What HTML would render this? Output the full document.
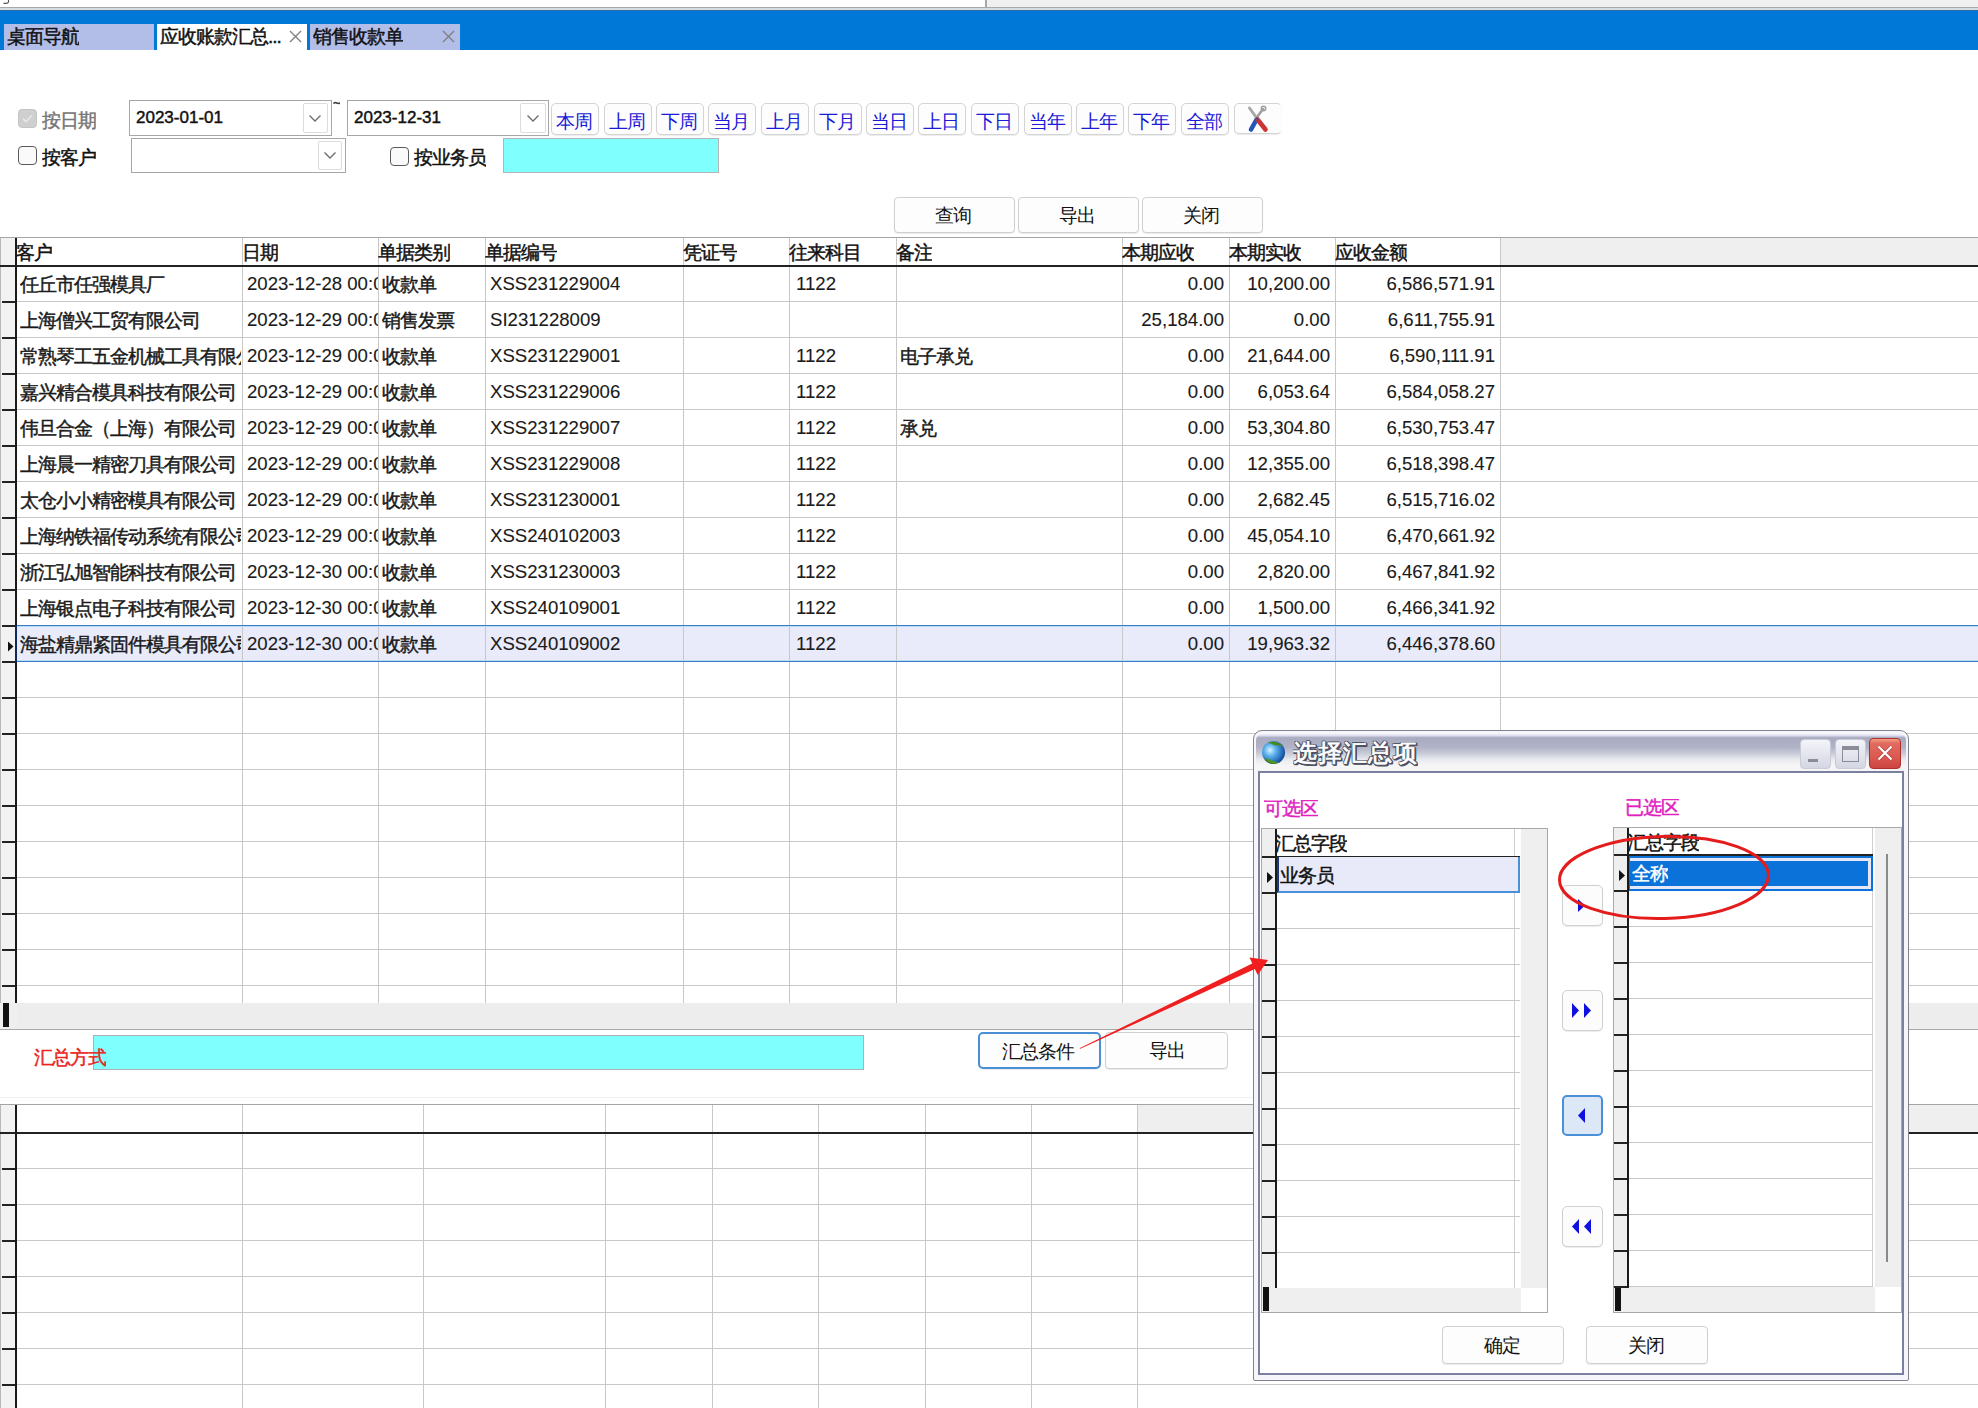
<!DOCTYPE html><html><head><meta charset='utf-8'><style>
*{margin:0;padding:0;box-sizing:border-box}
html,body{width:1978px;height:1408px;overflow:hidden;background:#fff}
body{position:relative;font-family:"Liberation Sans",sans-serif;font-size:19px;letter-spacing:-1px;color:#000}
.t{-webkit-text-stroke:0.45px currentColor}
.n{font-size:18.6px!important;letter-spacing:0!important;-webkit-text-stroke:0.1px currentColor}
div{position:absolute}
.t{white-space:nowrap;overflow:hidden}
.btn{border:1px solid #d0d0d0;border-radius:4px;background:#fdfdfd;text-align:center;box-shadow:0 1px 1px rgba(0,0,0,0.08)}
</style></head><body><div style="left:0px;top:0px;width:986px;height:7px;background:#fff"></div>
<div style="left:987px;top:0px;width:991px;height:7px;background:#f0f0f0"></div>
<div style="left:985px;top:0px;width:2px;height:8px;background:#a8a8a8"></div>
<div style="left:0px;top:7px;width:1978px;height:1px;background:#a8a8a8"></div>
<div style="left:0px;top:8px;width:1978px;height:2px;background:#d6dde2"></div>
<div style="left:0px;top:10px;width:1978px;height:1px;background:#2c6aa8"></div>
<div style="left:0px;top:11px;width:1978px;height:39px;background:#0078d7"></div>
<div style="left:4px;top:24px;width:150px;height:26px;background:#b2bde8"></div>
<div style="left:157px;top:24px;width:150px;height:26px;background:#fff"></div>
<div style="left:310px;top:24px;width:150px;height:26px;background:#b2bde8"></div>
<div class="t" style="left:7px;top:24px;line-height:26px;color:#111">桌面导航</div>
<div class="t" style="left:160px;top:24px;line-height:26px;color:#111">应收账款汇总...</div>
<div class="t" style="left:313px;top:24px;line-height:26px;color:#111">销售收款单</div>
<svg style="position:absolute;left:289px;top:30px" width="13" height="13"><path d="M1 1L12 12M12 1L1 12" stroke="#808080" stroke-width="1.4"/></svg>
<svg style="position:absolute;left:442px;top:30px" width="13" height="13"><path d="M1 1L12 12M12 1L1 12" stroke="#808080" stroke-width="1.4"/></svg>
<div style="left:18px;top:109px;width:19px;height:19px;border-radius:4px;background:#cfcfcf;border:1px solid #c4c4c4"></div>
<svg style="position:absolute;left:18px;top:109px" width="19" height="19"><path d="M5 9.5L8 12.5L14 6.5" stroke="#e8e8e8" stroke-width="1.6" fill="none"/></svg>
<div class="t" style="left:42px;top:106px;line-height:30px;color:#767676">按日期</div>
<div style="left:18px;top:146px;width:19px;height:19px;border-radius:4px;background:#fafafa;border:1.5px solid #5a5a5a"></div>
<div class="t" style="left:42px;top:143px;line-height:30px;color:#111">按客户</div>
<div style="left:129px;top:100px;width:203px;height:36px;border:1px solid #a6a6a6;background:#fff"></div>
<div style="left:303px;top:103px;width:25px;height:30px;border:1px solid #dcdcdc;border-radius:2px;background:#fff"></div>
<svg style="position:absolute;left:308px;top:114px" width="14" height="9"><path d="M1.5 1.5L7 7L12.5 1.5" stroke="#6a6a6a" stroke-width="1.3" fill="none"/></svg>
<div class="t" style="left:136px;top:100px;line-height:36px;font-size:17px;letter-spacing:0;color:#111">2023-01-01</div>
<div class="t" style="left:333px;top:93px;line-height:20px;font-size:14px;color:#333">~</div>
<div style="left:347px;top:100px;width:202px;height:36px;border:1px solid #a6a6a6;background:#fff"></div>
<div style="left:520px;top:103px;width:26px;height:30px;border:1px solid #dcdcdc;border-radius:2px;background:#fff"></div>
<svg style="position:absolute;left:526px;top:114px" width="14" height="9"><path d="M1.5 1.5L7 7L12.5 1.5" stroke="#6a6a6a" stroke-width="1.3" fill="none"/></svg>
<div class="t" style="left:354px;top:100px;line-height:36px;font-size:17px;letter-spacing:0;color:#111">2023-12-31</div>
<div style="left:131px;top:138px;width:215px;height:35px;border:1px solid #a6a6a6;background:#fff"></div>
<div style="left:318px;top:141px;width:24px;height:29px;border:1px solid #dcdcdc;border-radius:2px;background:#fff"></div>
<svg style="position:absolute;left:323px;top:151px" width="14" height="9"><path d="M1.5 1.5L7 7L12.5 1.5" stroke="#6a6a6a" stroke-width="1.3" fill="none"/></svg>
<div style="left:390px;top:147px;width:19px;height:19px;border-radius:4px;background:#fafafa;border:1.5px solid #5a5a5a"></div>
<div class="t" style="left:414px;top:143px;line-height:30px;color:#111">按业务员</div>
<div style="left:503px;top:138px;width:216px;height:35px;border:1px solid #b4b4b4;background:#80ffff"></div>
<div class="btn" style="left:551px;top:103px;width:48px;height:32px;border-color:#d4d4d4;border-radius:5px;line-height:36px;padding-right:3px;color:#1a1ad8">本周</div>
<div class="btn" style="left:604px;top:103px;width:48px;height:32px;border-color:#d4d4d4;border-radius:5px;line-height:36px;padding-right:3px;color:#1a1ad8">上周</div>
<div class="btn" style="left:656px;top:103px;width:48px;height:32px;border-color:#d4d4d4;border-radius:5px;line-height:36px;padding-right:3px;color:#1a1ad8">下周</div>
<div class="btn" style="left:708px;top:103px;width:48px;height:32px;border-color:#d4d4d4;border-radius:5px;line-height:36px;padding-right:3px;color:#1a1ad8">当月</div>
<div class="btn" style="left:761px;top:103px;width:48px;height:32px;border-color:#d4d4d4;border-radius:5px;line-height:36px;padding-right:3px;color:#1a1ad8">上月</div>
<div class="btn" style="left:814px;top:103px;width:48px;height:32px;border-color:#d4d4d4;border-radius:5px;line-height:36px;padding-right:3px;color:#1a1ad8">下月</div>
<div class="btn" style="left:866px;top:103px;width:48px;height:32px;border-color:#d4d4d4;border-radius:5px;line-height:36px;padding-right:3px;color:#1a1ad8">当日</div>
<div class="btn" style="left:918px;top:103px;width:48px;height:32px;border-color:#d4d4d4;border-radius:5px;line-height:36px;padding-right:3px;color:#1a1ad8">上日</div>
<div class="btn" style="left:971px;top:103px;width:48px;height:32px;border-color:#d4d4d4;border-radius:5px;line-height:36px;padding-right:3px;color:#1a1ad8">下日</div>
<div class="btn" style="left:1024px;top:103px;width:48px;height:32px;border-color:#d4d4d4;border-radius:5px;line-height:36px;padding-right:3px;color:#1a1ad8">当年</div>
<div class="btn" style="left:1076px;top:103px;width:48px;height:32px;border-color:#d4d4d4;border-radius:5px;line-height:36px;padding-right:3px;color:#1a1ad8">上年</div>
<div class="btn" style="left:1128px;top:103px;width:48px;height:32px;border-color:#d4d4d4;border-radius:5px;line-height:36px;padding-right:3px;color:#1a1ad8">下年</div>
<div class="btn" style="left:1181px;top:103px;width:48px;height:32px;border-color:#d4d4d4;border-radius:5px;line-height:36px;padding-right:3px;color:#1a1ad8">全部</div>
<div class="btn" style="left:1234px;top:103px;width:48px;height:31px;border-color:#d4d4d4;border-radius:5px;border-right-color:transparent"></div>
<svg style="position:absolute;left:1240px;top:100px" width="34" height="34" viewBox="0 0 34 34">
<path d="M9.5 8 L17 18.5" stroke="#a8a8a8" stroke-width="3" stroke-linecap="round"/>
<path d="M23 9 L16 18.5" stroke="#a0a0a0" stroke-width="2.6" stroke-linecap="round"/>
<circle cx="23.5" cy="8.5" r="2.2" fill="none" stroke="#a0a0a0" stroke-width="1.6"/>
<path d="M16 20.5 L11 29.5" stroke="#2456b8" stroke-width="4.6" stroke-linecap="round"/>
<path d="M17.5 19.5 L25.5 29.5" stroke="#cc3434" stroke-width="4.6" stroke-linecap="round"/>
<path d="M16.5 17.5 L18 20.5" stroke="#704070" stroke-width="2.4"/>
</svg>
<div class="btn" style="left:894px;top:197px;width:121px;height:36px;line-height:36px;padding-right:4px;color:#111">查询</div>
<div class="btn" style="left:1018px;top:197px;width:121px;height:36px;line-height:36px;padding-right:4px;color:#111">导出</div>
<div class="btn" style="left:1142px;top:197px;width:121px;height:36px;line-height:36px;padding-right:4px;color:#111">关闭</div>
<div style="left:0px;top:237px;width:1978px;height:1px;background:#a4a4a4"></div>
<div style="left:0px;top:238px;width:15px;height:765px;background:#f2f2f2"></div>
<div style="left:0px;top:238px;width:1px;height:765px;background:#b8b8b8"></div>
<div style="left:1501px;top:238px;width:477px;height:27px;background:#efefef"></div>
<div style="left:242px;top:238px;width:1px;height:765px;background:#c8c8c8"></div>
<div style="left:378px;top:238px;width:1px;height:765px;background:#c8c8c8"></div>
<div style="left:485px;top:238px;width:1px;height:765px;background:#c8c8c8"></div>
<div style="left:683px;top:238px;width:1px;height:765px;background:#c8c8c8"></div>
<div style="left:789px;top:238px;width:1px;height:765px;background:#c8c8c8"></div>
<div style="left:896px;top:238px;width:1px;height:765px;background:#c8c8c8"></div>
<div style="left:1122px;top:238px;width:1px;height:765px;background:#c8c8c8"></div>
<div style="left:1229px;top:238px;width:1px;height:765px;background:#c8c8c8"></div>
<div style="left:1335px;top:238px;width:1px;height:765px;background:#c8c8c8"></div>
<div style="left:1500px;top:238px;width:1px;height:765px;background:#c8c8c8"></div>
<div style="left:17px;top:301px;width:1961px;height:1px;background:#c8c8c8"></div>
<div style="left:2px;top:301px;width:14px;height:2px;background:#222"></div>
<div style="left:17px;top:337px;width:1961px;height:1px;background:#c8c8c8"></div>
<div style="left:2px;top:337px;width:14px;height:2px;background:#222"></div>
<div style="left:17px;top:373px;width:1961px;height:1px;background:#c8c8c8"></div>
<div style="left:2px;top:373px;width:14px;height:2px;background:#222"></div>
<div style="left:17px;top:409px;width:1961px;height:1px;background:#c8c8c8"></div>
<div style="left:2px;top:409px;width:14px;height:2px;background:#222"></div>
<div style="left:17px;top:445px;width:1961px;height:1px;background:#c8c8c8"></div>
<div style="left:2px;top:445px;width:14px;height:2px;background:#222"></div>
<div style="left:17px;top:481px;width:1961px;height:1px;background:#c8c8c8"></div>
<div style="left:2px;top:481px;width:14px;height:2px;background:#222"></div>
<div style="left:17px;top:517px;width:1961px;height:1px;background:#c8c8c8"></div>
<div style="left:2px;top:517px;width:14px;height:2px;background:#222"></div>
<div style="left:17px;top:553px;width:1961px;height:1px;background:#c8c8c8"></div>
<div style="left:2px;top:553px;width:14px;height:2px;background:#222"></div>
<div style="left:17px;top:589px;width:1961px;height:1px;background:#c8c8c8"></div>
<div style="left:2px;top:589px;width:14px;height:2px;background:#222"></div>
<div style="left:17px;top:625px;width:1961px;height:1px;background:#c8c8c8"></div>
<div style="left:2px;top:625px;width:14px;height:2px;background:#222"></div>
<div style="left:17px;top:661px;width:1961px;height:1px;background:#c8c8c8"></div>
<div style="left:2px;top:661px;width:14px;height:2px;background:#222"></div>
<div style="left:17px;top:697px;width:1961px;height:1px;background:#c8c8c8"></div>
<div style="left:2px;top:697px;width:14px;height:2px;background:#222"></div>
<div style="left:17px;top:733px;width:1961px;height:1px;background:#c8c8c8"></div>
<div style="left:2px;top:733px;width:14px;height:2px;background:#222"></div>
<div style="left:17px;top:769px;width:1961px;height:1px;background:#c8c8c8"></div>
<div style="left:2px;top:769px;width:14px;height:2px;background:#222"></div>
<div style="left:17px;top:805px;width:1961px;height:1px;background:#c8c8c8"></div>
<div style="left:2px;top:805px;width:14px;height:2px;background:#222"></div>
<div style="left:17px;top:841px;width:1961px;height:1px;background:#c8c8c8"></div>
<div style="left:2px;top:841px;width:14px;height:2px;background:#222"></div>
<div style="left:17px;top:877px;width:1961px;height:1px;background:#c8c8c8"></div>
<div style="left:2px;top:877px;width:14px;height:2px;background:#222"></div>
<div style="left:17px;top:913px;width:1961px;height:1px;background:#c8c8c8"></div>
<div style="left:2px;top:913px;width:14px;height:2px;background:#222"></div>
<div style="left:17px;top:949px;width:1961px;height:1px;background:#c8c8c8"></div>
<div style="left:2px;top:949px;width:14px;height:2px;background:#222"></div>
<div style="left:17px;top:985px;width:1961px;height:1px;background:#c8c8c8"></div>
<div style="left:2px;top:985px;width:14px;height:2px;background:#222"></div>
<div style="left:0px;top:265px;width:1978px;height:2px;background:#222"></div>
<div style="left:15px;top:238px;width:2px;height:765px;background:#1a1a1a"></div>
<div class="t" style="left:16px;top:239px;line-height:27px;color:#111">客户</div>
<div class="t" style="left:242px;top:239px;line-height:27px;color:#111">日期</div>
<div class="t" style="left:378px;top:239px;line-height:27px;color:#111">单据类别</div>
<div class="t" style="left:485px;top:239px;line-height:27px;color:#111">单据编号</div>
<div class="t" style="left:683px;top:239px;line-height:27px;color:#111">凭证号</div>
<div class="t" style="left:789px;top:239px;line-height:27px;color:#111">往来科目</div>
<div class="t" style="left:896px;top:239px;line-height:27px;color:#111">备注</div>
<div class="t" style="left:1122px;top:239px;line-height:27px;color:#111">本期应收</div>
<div class="t" style="left:1229px;top:239px;line-height:27px;color:#111">本期实收</div>
<div class="t" style="left:1335px;top:239px;line-height:27px;color:#111">应收金额</div>
<div style="left:17px;top:626px;width:1961px;height:36px;background:#e9ebfa"></div>
<div style="left:242px;top:626px;width:1px;height:36px;background:#c8c8c8"></div>
<div style="left:378px;top:626px;width:1px;height:36px;background:#c8c8c8"></div>
<div style="left:485px;top:626px;width:1px;height:36px;background:#c8c8c8"></div>
<div style="left:683px;top:626px;width:1px;height:36px;background:#c8c8c8"></div>
<div style="left:789px;top:626px;width:1px;height:36px;background:#c8c8c8"></div>
<div style="left:896px;top:626px;width:1px;height:36px;background:#c8c8c8"></div>
<div style="left:1122px;top:626px;width:1px;height:36px;background:#c8c8c8"></div>
<div style="left:1229px;top:626px;width:1px;height:36px;background:#c8c8c8"></div>
<div style="left:1335px;top:626px;width:1px;height:36px;background:#c8c8c8"></div>
<div style="left:1500px;top:626px;width:1px;height:36px;background:#c8c8c8"></div>
<div style="left:17px;top:625px;width:1961px;height:1px;background:#3a7cc4"></div>
<div style="left:17px;top:626px;width:1961px;height:1px;background:#b8dcf4"></div>
<div style="left:17px;top:660px;width:1961px;height:1px;background:#b8dcf4"></div>
<div style="left:17px;top:661px;width:1961px;height:1px;background:#3a7cc4"></div>
<div style="left:15px;top:625px;width:2px;height:37px;background:#0a2a60"></div>
<svg style="position:absolute;left:7px;top:641px" width="8" height="12"><path d="M1 0.5L6.5 5.5L1 10.5Z" fill="#111"/></svg>
<div class="t" style="left:20px;top:268px;line-height:34px;width:221px;color:#1a1a1a">任丘市任强模具厂</div>
<div class="t n" style="left:247px;top:267px;line-height:34px;width:131px;color:#1a1a1a">2023-12-28 00:00:00</div>
<div class="t" style="left:382px;top:268px;line-height:34px;width:103px;color:#1a1a1a">收款单</div>
<div class="t n" style="left:490px;top:267px;line-height:34px;width:193px;color:#1a1a1a">XSS231229004</div>
<div class="t n" style="left:796px;top:267px;line-height:34px;width:100px;color:#1a1a1a">1122</div>
<div class="t n" style="left:1123px;top:267px;line-height:34px;width:101px;text-align:right;color:#1a1a1a">0.00</div>
<div class="t n" style="left:1230px;top:267px;line-height:34px;width:100px;text-align:right;color:#1a1a1a">10,200.00</div>
<div class="t n" style="left:1336px;top:267px;line-height:34px;width:159px;text-align:right;color:#1a1a1a">6,586,571.91</div>
<div class="t" style="left:20px;top:304px;line-height:34px;width:221px;color:#1a1a1a">上海僧兴工贸有限公司</div>
<div class="t n" style="left:247px;top:303px;line-height:34px;width:131px;color:#1a1a1a">2023-12-29 00:00:00</div>
<div class="t" style="left:382px;top:304px;line-height:34px;width:103px;color:#1a1a1a">销售发票</div>
<div class="t n" style="left:490px;top:303px;line-height:34px;width:193px;color:#1a1a1a">SI231228009</div>
<div class="t n" style="left:1123px;top:303px;line-height:34px;width:101px;text-align:right;color:#1a1a1a">25,184.00</div>
<div class="t n" style="left:1230px;top:303px;line-height:34px;width:100px;text-align:right;color:#1a1a1a">0.00</div>
<div class="t n" style="left:1336px;top:303px;line-height:34px;width:159px;text-align:right;color:#1a1a1a">6,611,755.91</div>
<div class="t" style="left:20px;top:340px;line-height:34px;width:221px;color:#1a1a1a">常熟琴工五金机械工具有限公司</div>
<div class="t n" style="left:247px;top:339px;line-height:34px;width:131px;color:#1a1a1a">2023-12-29 00:00:00</div>
<div class="t" style="left:382px;top:340px;line-height:34px;width:103px;color:#1a1a1a">收款单</div>
<div class="t n" style="left:490px;top:339px;line-height:34px;width:193px;color:#1a1a1a">XSS231229001</div>
<div class="t n" style="left:796px;top:339px;line-height:34px;width:100px;color:#1a1a1a">1122</div>
<div class="t" style="left:900px;top:340px;line-height:34px;width:222px;color:#1a1a1a">电子承兑</div>
<div class="t n" style="left:1123px;top:339px;line-height:34px;width:101px;text-align:right;color:#1a1a1a">0.00</div>
<div class="t n" style="left:1230px;top:339px;line-height:34px;width:100px;text-align:right;color:#1a1a1a">21,644.00</div>
<div class="t n" style="left:1336px;top:339px;line-height:34px;width:159px;text-align:right;color:#1a1a1a">6,590,111.91</div>
<div class="t" style="left:20px;top:376px;line-height:34px;width:221px;color:#1a1a1a">嘉兴精合模具科技有限公司</div>
<div class="t n" style="left:247px;top:375px;line-height:34px;width:131px;color:#1a1a1a">2023-12-29 00:00:00</div>
<div class="t" style="left:382px;top:376px;line-height:34px;width:103px;color:#1a1a1a">收款单</div>
<div class="t n" style="left:490px;top:375px;line-height:34px;width:193px;color:#1a1a1a">XSS231229006</div>
<div class="t n" style="left:796px;top:375px;line-height:34px;width:100px;color:#1a1a1a">1122</div>
<div class="t n" style="left:1123px;top:375px;line-height:34px;width:101px;text-align:right;color:#1a1a1a">0.00</div>
<div class="t n" style="left:1230px;top:375px;line-height:34px;width:100px;text-align:right;color:#1a1a1a">6,053.64</div>
<div class="t n" style="left:1336px;top:375px;line-height:34px;width:159px;text-align:right;color:#1a1a1a">6,584,058.27</div>
<div class="t" style="left:20px;top:412px;line-height:34px;width:221px;color:#1a1a1a">伟旦合金（上海）有限公司</div>
<div class="t n" style="left:247px;top:411px;line-height:34px;width:131px;color:#1a1a1a">2023-12-29 00:00:00</div>
<div class="t" style="left:382px;top:412px;line-height:34px;width:103px;color:#1a1a1a">收款单</div>
<div class="t n" style="left:490px;top:411px;line-height:34px;width:193px;color:#1a1a1a">XSS231229007</div>
<div class="t n" style="left:796px;top:411px;line-height:34px;width:100px;color:#1a1a1a">1122</div>
<div class="t" style="left:900px;top:412px;line-height:34px;width:222px;color:#1a1a1a">承兑</div>
<div class="t n" style="left:1123px;top:411px;line-height:34px;width:101px;text-align:right;color:#1a1a1a">0.00</div>
<div class="t n" style="left:1230px;top:411px;line-height:34px;width:100px;text-align:right;color:#1a1a1a">53,304.80</div>
<div class="t n" style="left:1336px;top:411px;line-height:34px;width:159px;text-align:right;color:#1a1a1a">6,530,753.47</div>
<div class="t" style="left:20px;top:448px;line-height:34px;width:221px;color:#1a1a1a">上海晨一精密刀具有限公司</div>
<div class="t n" style="left:247px;top:447px;line-height:34px;width:131px;color:#1a1a1a">2023-12-29 00:00:00</div>
<div class="t" style="left:382px;top:448px;line-height:34px;width:103px;color:#1a1a1a">收款单</div>
<div class="t n" style="left:490px;top:447px;line-height:34px;width:193px;color:#1a1a1a">XSS231229008</div>
<div class="t n" style="left:796px;top:447px;line-height:34px;width:100px;color:#1a1a1a">1122</div>
<div class="t n" style="left:1123px;top:447px;line-height:34px;width:101px;text-align:right;color:#1a1a1a">0.00</div>
<div class="t n" style="left:1230px;top:447px;line-height:34px;width:100px;text-align:right;color:#1a1a1a">12,355.00</div>
<div class="t n" style="left:1336px;top:447px;line-height:34px;width:159px;text-align:right;color:#1a1a1a">6,518,398.47</div>
<div class="t" style="left:20px;top:484px;line-height:34px;width:221px;color:#1a1a1a">太仓小小精密模具有限公司</div>
<div class="t n" style="left:247px;top:483px;line-height:34px;width:131px;color:#1a1a1a">2023-12-29 00:00:00</div>
<div class="t" style="left:382px;top:484px;line-height:34px;width:103px;color:#1a1a1a">收款单</div>
<div class="t n" style="left:490px;top:483px;line-height:34px;width:193px;color:#1a1a1a">XSS231230001</div>
<div class="t n" style="left:796px;top:483px;line-height:34px;width:100px;color:#1a1a1a">1122</div>
<div class="t n" style="left:1123px;top:483px;line-height:34px;width:101px;text-align:right;color:#1a1a1a">0.00</div>
<div class="t n" style="left:1230px;top:483px;line-height:34px;width:100px;text-align:right;color:#1a1a1a">2,682.45</div>
<div class="t n" style="left:1336px;top:483px;line-height:34px;width:159px;text-align:right;color:#1a1a1a">6,515,716.02</div>
<div class="t" style="left:20px;top:520px;line-height:34px;width:221px;color:#1a1a1a">上海纳铁福传动系统有限公司</div>
<div class="t n" style="left:247px;top:519px;line-height:34px;width:131px;color:#1a1a1a">2023-12-29 00:00:00</div>
<div class="t" style="left:382px;top:520px;line-height:34px;width:103px;color:#1a1a1a">收款单</div>
<div class="t n" style="left:490px;top:519px;line-height:34px;width:193px;color:#1a1a1a">XSS240102003</div>
<div class="t n" style="left:796px;top:519px;line-height:34px;width:100px;color:#1a1a1a">1122</div>
<div class="t n" style="left:1123px;top:519px;line-height:34px;width:101px;text-align:right;color:#1a1a1a">0.00</div>
<div class="t n" style="left:1230px;top:519px;line-height:34px;width:100px;text-align:right;color:#1a1a1a">45,054.10</div>
<div class="t n" style="left:1336px;top:519px;line-height:34px;width:159px;text-align:right;color:#1a1a1a">6,470,661.92</div>
<div class="t" style="left:20px;top:556px;line-height:34px;width:221px;color:#1a1a1a">浙江弘旭智能科技有限公司</div>
<div class="t n" style="left:247px;top:555px;line-height:34px;width:131px;color:#1a1a1a">2023-12-30 00:00:00</div>
<div class="t" style="left:382px;top:556px;line-height:34px;width:103px;color:#1a1a1a">收款单</div>
<div class="t n" style="left:490px;top:555px;line-height:34px;width:193px;color:#1a1a1a">XSS231230003</div>
<div class="t n" style="left:796px;top:555px;line-height:34px;width:100px;color:#1a1a1a">1122</div>
<div class="t n" style="left:1123px;top:555px;line-height:34px;width:101px;text-align:right;color:#1a1a1a">0.00</div>
<div class="t n" style="left:1230px;top:555px;line-height:34px;width:100px;text-align:right;color:#1a1a1a">2,820.00</div>
<div class="t n" style="left:1336px;top:555px;line-height:34px;width:159px;text-align:right;color:#1a1a1a">6,467,841.92</div>
<div class="t" style="left:20px;top:592px;line-height:34px;width:221px;color:#1a1a1a">上海银点电子科技有限公司</div>
<div class="t n" style="left:247px;top:591px;line-height:34px;width:131px;color:#1a1a1a">2023-12-30 00:00:00</div>
<div class="t" style="left:382px;top:592px;line-height:34px;width:103px;color:#1a1a1a">收款单</div>
<div class="t n" style="left:490px;top:591px;line-height:34px;width:193px;color:#1a1a1a">XSS240109001</div>
<div class="t n" style="left:796px;top:591px;line-height:34px;width:100px;color:#1a1a1a">1122</div>
<div class="t n" style="left:1123px;top:591px;line-height:34px;width:101px;text-align:right;color:#1a1a1a">0.00</div>
<div class="t n" style="left:1230px;top:591px;line-height:34px;width:100px;text-align:right;color:#1a1a1a">1,500.00</div>
<div class="t n" style="left:1336px;top:591px;line-height:34px;width:159px;text-align:right;color:#1a1a1a">6,466,341.92</div>
<div class="t" style="left:20px;top:628px;line-height:34px;width:221px;color:#1a1a1a">海盐精鼎紧固件模具有限公司</div>
<div class="t n" style="left:247px;top:627px;line-height:34px;width:131px;color:#1a1a1a">2023-12-30 00:00:00</div>
<div class="t" style="left:382px;top:628px;line-height:34px;width:103px;color:#1a1a1a">收款单</div>
<div class="t n" style="left:490px;top:627px;line-height:34px;width:193px;color:#1a1a1a">XSS240109002</div>
<div class="t n" style="left:796px;top:627px;line-height:34px;width:100px;color:#1a1a1a">1122</div>
<div class="t n" style="left:1123px;top:627px;line-height:34px;width:101px;text-align:right;color:#1a1a1a">0.00</div>
<div class="t n" style="left:1230px;top:627px;line-height:34px;width:100px;text-align:right;color:#1a1a1a">19,963.32</div>
<div class="t n" style="left:1336px;top:627px;line-height:34px;width:159px;text-align:right;color:#1a1a1a">6,446,378.60</div>
<div style="left:17px;top:1003px;width:1961px;height:26px;background:#ededed"></div>
<div style="left:0px;top:1003px;width:17px;height:26px;background:#efefef"></div>
<div style="left:3px;top:1003px;width:6px;height:24px;background:#111"></div>
<div style="left:0px;top:1029px;width:1978px;height:1px;background:#a8a8a8"></div>
<div style="left:93px;top:1035px;width:771px;height:35px;border:1px solid #b0b0b0;background:#80ffff"></div>
<div class="t" style="left:34px;top:1041px;line-height:34px;color:#e8241c">汇总方式</div>
<div class="btn" style="left:978px;top:1032px;width:123px;height:37px;line-height:35px;padding-right:4px;border:2px solid #4a8fd6;border-radius:5px;color:#111">汇总条件</div>
<div class="btn" style="left:1105px;top:1032px;width:123px;height:37px;line-height:36px;color:#111">导出</div>
<div style="left:0px;top:1104px;width:1978px;height:1px;background:#a4a4a4"></div>
<div style="left:0px;top:1105px;width:15px;height:303px;background:#f2f2f2"></div>
<div style="left:0px;top:1105px;width:1px;height:303px;background:#b8b8b8"></div>
<div style="left:1138px;top:1105px;width:840px;height:27px;background:#efefef"></div>
<div style="left:242px;top:1105px;width:1px;height:303px;background:#c8c8c8"></div>
<div style="left:423px;top:1105px;width:1px;height:303px;background:#c8c8c8"></div>
<div style="left:605px;top:1105px;width:1px;height:303px;background:#c8c8c8"></div>
<div style="left:712px;top:1105px;width:1px;height:303px;background:#c8c8c8"></div>
<div style="left:818px;top:1105px;width:1px;height:303px;background:#c8c8c8"></div>
<div style="left:925px;top:1105px;width:1px;height:303px;background:#c8c8c8"></div>
<div style="left:1031px;top:1105px;width:1px;height:303px;background:#c8c8c8"></div>
<div style="left:1137px;top:1105px;width:1px;height:303px;background:#c8c8c8"></div>
<div style="left:17px;top:1168px;width:1961px;height:1px;background:#c8c8c8"></div>
<div style="left:2px;top:1168px;width:14px;height:2px;background:#222"></div>
<div style="left:17px;top:1204px;width:1961px;height:1px;background:#c8c8c8"></div>
<div style="left:2px;top:1204px;width:14px;height:2px;background:#222"></div>
<div style="left:17px;top:1240px;width:1961px;height:1px;background:#c8c8c8"></div>
<div style="left:2px;top:1240px;width:14px;height:2px;background:#222"></div>
<div style="left:17px;top:1276px;width:1961px;height:1px;background:#c8c8c8"></div>
<div style="left:2px;top:1276px;width:14px;height:2px;background:#222"></div>
<div style="left:17px;top:1312px;width:1961px;height:1px;background:#c8c8c8"></div>
<div style="left:2px;top:1312px;width:14px;height:2px;background:#222"></div>
<div style="left:17px;top:1348px;width:1961px;height:1px;background:#c8c8c8"></div>
<div style="left:2px;top:1348px;width:14px;height:2px;background:#222"></div>
<div style="left:17px;top:1384px;width:1961px;height:1px;background:#c8c8c8"></div>
<div style="left:2px;top:1384px;width:14px;height:2px;background:#222"></div>
<div style="left:0px;top:1132px;width:1978px;height:2px;background:#222"></div>
<div style="left:15px;top:1105px;width:2px;height:303px;background:#1a1a1a"></div>
<div style="left:1253px;top:730px;width:656px;height:651px;border:1px solid #80828e;border-radius:9px 9px 2px 2px;background:#f6f6fa"></div>
<div style="left:1256px;top:734px;width:650px;height:37px;border-radius:6px 6px 0 0;background:linear-gradient(#ecebf8 0%,#e0e0f0 4%,#a9abc1 10%,#b0b3c7 35%,#c8cad6 52%,#e8e9ee 68%,#f6f6f6 85%,#f4f4f6 100%)"></div>
<div style="left:1258px;top:771px;width:646px;height:604px;border:2px solid #7c80a0;background:#fff"></div>
<svg style="position:absolute;left:1261px;top:740px" width="25" height="25" viewBox="0 0 25 25">
<defs><radialGradient id="gl" cx="0.35" cy="0.4" r="0.75"><stop offset="0" stop-color="#d8f4ff"/><stop offset="0.35" stop-color="#5ab0ea"/><stop offset="0.8" stop-color="#1a5cb0"/><stop offset="1" stop-color="#0a3070"/></radialGradient></defs>
<circle cx="12.5" cy="12.5" r="11.5" fill="url(#gl)"/>
<path d="M7 2.5 C12 0.5 19 2 22.5 7.5 C20 6 17 5 14 5.5 C11 4 9 3.5 7 2.5Z" fill="#4a8a1a"/>
<path d="M3 17 C6 21 10 23.5 16 23.5 C13 24.5 8 24 4.5 20.5Z" fill="#3d7a14"/>
<path d="M4.5 18 C8 19 12 21.5 18 22.5 C14 24.5 8 24 4.5 18Z" fill="#4f9a1c"/>
</svg>
<div class="t" style="left:1293px;top:738px;line-height:30px;font-size:24px;letter-spacing:1px;font-weight:normal;color:#fff;-webkit-text-stroke:0.7px #fff;text-shadow:-1px -1px 0 #505264,1px -1px 0 #505264,-1px 1px 0 #505264,1px 1px 0 #505264,0px 1px 0 #505264,0px -1px 0 #505264,1px 0px 0 #505264,-1px 0px 0 #505264,2px 1px 0 #505264,1px 2px 0 #505264,2px 2px 0 #505264,0px 2px 0 #505264,2px 0px 0 #505264">选择汇总项</div>
<div style="left:1800px;top:739px;width:31px;height:30px;border:1px solid #c8cad8;border-radius:4px;background:linear-gradient(#f4f4fa,#d4d6e2)"></div>
<div style="left:1835px;top:739px;width:31px;height:30px;border:1px solid #c8cad8;border-radius:4px;background:linear-gradient(#f4f4fa,#d4d6e2)"></div>
<div style="left:1808px;top:759px;width:10px;height:3px;background:#8a8c98"></div>
<div style="left:1842px;top:746px;width:17px;height:16px;border:1.5px solid #8a8c98;border-top-width:4px;background:transparent"></div>
<div style="left:1869px;top:738px;width:32px;height:31px;border:1px solid #b03030;border-radius:4px;background:linear-gradient(#f0a080 0%,#e26a60 15%,#dc5a52 60%,#cc4440 100%)"></div>
<svg style="position:absolute;left:1874px;top:742px" width="22" height="22"><path d="M4.5 4.5L17.5 17.5M17.5 4.5L4.5 17.5" stroke="#8a2a2a" stroke-width="3.6" stroke-opacity="0.5"/><path d="M4.5 4.5L17.5 17.5M17.5 4.5L4.5 17.5" stroke="#fff" stroke-width="2.2"/></svg>
<div class="t" style="left:1264px;top:796px;line-height:25px;color:#e020c0">可选区</div>
<div class="t" style="left:1625px;top:795px;line-height:25px;color:#e020c0">已选区</div>
<div style="left:1261px;top:828px;width:287px;height:485px;border:1px solid #a8a8a8;background:#fff"></div>
<div style="left:1262px;top:829px;width:14px;height:459px;background:#efefef"></div>
<div style="left:1521px;top:829px;width:26px;height:459px;background:#efefef"></div>
<div style="left:1262px;top:1288px;width:259px;height:24px;background:#efefef"></div>
<div style="left:1263px;top:1287px;width:6px;height:24px;background:#111"></div>
<div style="left:1514px;top:829px;width:1px;height:459px;background:#cfcfcf"></div>
<div style="left:1277px;top:892px;width:243px;height:1px;background:#c8c8c8"></div>
<div style="left:1262px;top:892px;width:15px;height:2px;background:#222"></div>
<div style="left:1277px;top:928px;width:243px;height:1px;background:#c8c8c8"></div>
<div style="left:1262px;top:928px;width:15px;height:2px;background:#222"></div>
<div style="left:1277px;top:964px;width:243px;height:1px;background:#c8c8c8"></div>
<div style="left:1262px;top:964px;width:15px;height:2px;background:#222"></div>
<div style="left:1277px;top:1000px;width:243px;height:1px;background:#c8c8c8"></div>
<div style="left:1262px;top:1000px;width:15px;height:2px;background:#222"></div>
<div style="left:1277px;top:1036px;width:243px;height:1px;background:#c8c8c8"></div>
<div style="left:1262px;top:1036px;width:15px;height:2px;background:#222"></div>
<div style="left:1277px;top:1072px;width:243px;height:1px;background:#c8c8c8"></div>
<div style="left:1262px;top:1072px;width:15px;height:2px;background:#222"></div>
<div style="left:1277px;top:1108px;width:243px;height:1px;background:#c8c8c8"></div>
<div style="left:1262px;top:1108px;width:15px;height:2px;background:#222"></div>
<div style="left:1277px;top:1144px;width:243px;height:1px;background:#c8c8c8"></div>
<div style="left:1262px;top:1144px;width:15px;height:2px;background:#222"></div>
<div style="left:1277px;top:1180px;width:243px;height:1px;background:#c8c8c8"></div>
<div style="left:1262px;top:1180px;width:15px;height:2px;background:#222"></div>
<div style="left:1277px;top:1216px;width:243px;height:1px;background:#c8c8c8"></div>
<div style="left:1262px;top:1216px;width:15px;height:2px;background:#222"></div>
<div style="left:1277px;top:1252px;width:243px;height:1px;background:#c8c8c8"></div>
<div style="left:1262px;top:1252px;width:15px;height:2px;background:#222"></div>
<div style="left:1262px;top:856px;width:258px;height:2px;background:#222"></div>
<div style="left:1275px;top:829px;width:2px;height:459px;background:#1a1a1a"></div>
<div class="t" style="left:1275px;top:830px;line-height:27px;color:#111">汇总字段</div>
<div style="left:1275px;top:829px;width:2px;height:27px;background:#1a1a1a"></div>
<div style="left:1277px;top:857px;width:243px;height:36px;background:#e8eafa;border:2px solid #4a90d8;border-top:none;border-left:2px solid #1a3a80"></div>
<div class="t" style="left:1280px;top:859px;line-height:34px;color:#111">业务员</div>
<svg style="position:absolute;left:1266px;top:871px" width="8" height="13"><path d="M1 1L7 6.5L1 12Z" fill="#111"/></svg>
<div style="left:1613px;top:827px;width:289px;height:486px;border:1px solid #a8a8a8;background:#fff"></div>
<div style="left:1614px;top:828px;width:14px;height:459px;background:#efefef"></div>
<div style="left:1875px;top:828px;width:26px;height:459px;background:#efefef"></div>
<div style="left:1614px;top:1287px;width:261px;height:25px;background:#efefef"></div>
<div style="left:1615px;top:1286px;width:6px;height:25px;background:#111"></div>
<div style="left:1872px;top:828px;width:1px;height:459px;background:#cfcfcf"></div>
<div style="left:1629px;top:890px;width:244px;height:1px;background:#c8c8c8"></div>
<div style="left:1614px;top:890px;width:15px;height:2px;background:#222"></div>
<div style="left:1629px;top:926px;width:244px;height:1px;background:#c8c8c8"></div>
<div style="left:1614px;top:926px;width:15px;height:2px;background:#222"></div>
<div style="left:1629px;top:962px;width:244px;height:1px;background:#c8c8c8"></div>
<div style="left:1614px;top:962px;width:15px;height:2px;background:#222"></div>
<div style="left:1629px;top:998px;width:244px;height:1px;background:#c8c8c8"></div>
<div style="left:1614px;top:998px;width:15px;height:2px;background:#222"></div>
<div style="left:1629px;top:1034px;width:244px;height:1px;background:#c8c8c8"></div>
<div style="left:1614px;top:1034px;width:15px;height:2px;background:#222"></div>
<div style="left:1629px;top:1070px;width:244px;height:1px;background:#c8c8c8"></div>
<div style="left:1614px;top:1070px;width:15px;height:2px;background:#222"></div>
<div style="left:1629px;top:1106px;width:244px;height:1px;background:#c8c8c8"></div>
<div style="left:1614px;top:1106px;width:15px;height:2px;background:#222"></div>
<div style="left:1629px;top:1142px;width:244px;height:1px;background:#c8c8c8"></div>
<div style="left:1614px;top:1142px;width:15px;height:2px;background:#222"></div>
<div style="left:1629px;top:1178px;width:244px;height:1px;background:#c8c8c8"></div>
<div style="left:1614px;top:1178px;width:15px;height:2px;background:#222"></div>
<div style="left:1629px;top:1214px;width:244px;height:1px;background:#c8c8c8"></div>
<div style="left:1614px;top:1214px;width:15px;height:2px;background:#222"></div>
<div style="left:1629px;top:1250px;width:244px;height:1px;background:#c8c8c8"></div>
<div style="left:1614px;top:1250px;width:15px;height:2px;background:#222"></div>
<div style="left:1629px;top:1286px;width:244px;height:1px;background:#c8c8c8"></div>
<div style="left:1614px;top:1286px;width:15px;height:2px;background:#222"></div>
<div style="left:1614px;top:1286px;width:15px;height:2px;background:#222"></div>
<div style="left:1614px;top:854px;width:259px;height:2px;background:#222"></div>
<div style="left:1627px;top:828px;width:2px;height:459px;background:#1a1a1a"></div>
<div class="t" style="left:1627px;top:829px;line-height:27px;color:#111">汇总字段</div>
<div style="left:1627px;top:828px;width:2px;height:26px;background:#1a1a1a"></div>
<div style="left:1629px;top:856px;width:244px;height:35px;background:#0a72d8"></div>
<div style="left:1630px;top:858px;width:241px;height:31px;border:3px solid #e6e8f8;border-left:none"></div>
<div style="left:1630px;top:861px;width:238px;height:25px;background:#0a72d8"></div>
<div class="t" style="left:1632px;top:857px;line-height:34px;color:#fff">全称</div>
<svg style="position:absolute;left:1618px;top:869px" width="8" height="13"><path d="M1 1L7 6.5L1 12Z" fill="#111"/></svg>
<div style="left:1886px;top:854px;width:2px;height:408px;background:#8a8a8a"></div>
<div style="left:1562px;top:885px;width:41px;height:41px;border:1px solid #d0d0d0;border-radius:5px;background:#fcfcfc;box-shadow:0 1px 1px rgba(0,0,0,0.08)"></div>
<svg style="position:absolute;left:1562px;top:885px" width="41" height="41"><path d="M16 14L23 20.5L16 27Z" fill="#1010e0"/></svg>
<div style="left:1562px;top:990px;width:41px;height:41px;border:1px solid #d0d0d0;border-radius:5px;background:#fcfcfc;box-shadow:0 1px 1px rgba(0,0,0,0.08)"></div>
<svg style="position:absolute;left:1562px;top:990px" width="41" height="41"><path d="M10 13L17 20.5L10 28ZM22 13L29 20.5L22 28Z" fill="#1010e0"/></svg>
<div style="left:1562px;top:1095px;width:41px;height:41px;border:2px solid #4a90d8;border-radius:5px;background:#dce8f6"></div>
<svg style="position:absolute;left:1562px;top:1095px" width="41" height="41"><path d="M23 13L16 20.5L23 28Z" fill="#1010e0"/></svg>
<div style="left:1562px;top:1206px;width:41px;height:41px;border:1px solid #d0d0d0;border-radius:5px;background:#fcfcfc;box-shadow:0 1px 1px rgba(0,0,0,0.08)"></div>
<svg style="position:absolute;left:1562px;top:1206px" width="41" height="41"><path d="M17 13L10 20.5L17 28ZM29 13L22 20.5L29 28Z" fill="#1010e0"/></svg>
<div class="btn" style="left:1442px;top:1326px;width:122px;height:38px;line-height:37px;padding-right:3px;color:#111">确定</div>
<div class="btn" style="left:1586px;top:1326px;width:122px;height:38px;line-height:37px;padding-right:3px;color:#111">关闭</div>
<svg style="position:absolute;left:0;top:0" width="1978" height="1408">
<ellipse cx="1664" cy="877.5" rx="104.5" ry="41" transform="rotate(-1.5 1664 877.5)" fill="none" stroke="#e41c1c" stroke-width="3"/>
<path d="M1079.5 1048.3 L1252.3 963.5 L1249.5 957.4 L1268 960 L1257.7 974.9 L1254.9 968.9 L1080.3 1048.8 Z" fill="#f01e1e"/>
</svg>
<div style="left:0px;top:1097px;width:1253px;height:1px;background:#f2f2f2"></div>
<svg style="position:absolute;left:0;top:0" width="12" height="6"><path d="M8.5 0 L8.5 2 Q8 3.4 6 3.4 L3.5 3.4" stroke="#555" stroke-width="1.1" fill="none"/></svg></body></html>
